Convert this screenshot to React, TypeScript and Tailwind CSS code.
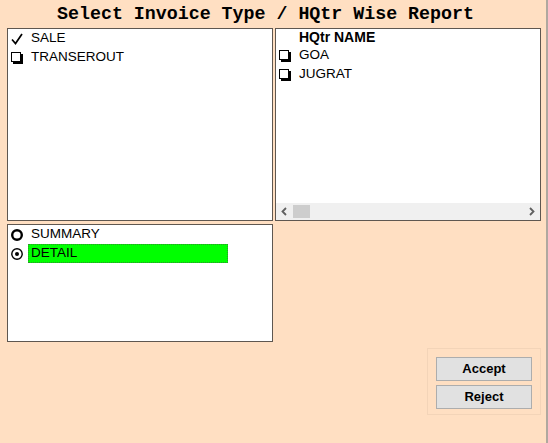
import React from "react";

const Tick = () => (
  <svg width="12" height="12" viewBox="0 0 12 12" className="shrink-0">
    <path d="M1 6.5 L4.5 10.5 L11 1" fill="none" stroke="#000" strokeWidth="1.7" />
  </svg>
);

const Box = () => (
  <svg width="12" height="12" viewBox="0 0 12 12" className="shrink-0">
    <rect x="0.5" y="0.5" width="9" height="9" fill="#fff" stroke="#000" />
    <rect x="10" y="2" width="2" height="10" fill="#000" />
    <rect x="2" y="10" width="10" height="2" fill="#000" />
  </svg>
);

const Radio = ({ on }: { on?: boolean }) => (
  <svg width="12" height="12" viewBox="0 0 12 12" className="shrink-0">
    <circle cx="6" cy="6" r={on ? 5.2 : 4.8} fill="#fff" stroke="#000" strokeWidth={on ? 1.4 : 2.4} />
    {on && <circle cx="6" cy="6" r="2" fill="#000" />}
  </svg>
);

const Chevron = ({ right }: { right?: boolean }) => (
  <svg width="17" height="17" viewBox="0 0 17 17" className="shrink-0">
    <path
      d={right ? "M7 5 L10.5 8.5 L7 12" : "M10 5 L6.5 8.5 L10 12"}
      fill="none"
      stroke="#606060"
      strokeWidth="1.8"
    />
  </svg>
);

const Row = ({ icon, label }: { icon: React.ReactNode; label: string }) => (
  <div className="flex items-center h-[19px] pl-[3px] gap-2">
    {icon}
    <span>{label}</span>
  </div>
);

export default function App() {
  return (
    <div className="w-[548px] h-[443px] bg-[#ffdfc2] border-r-2 border-[#b0a89f] text-[13.5px] text-black font-['Liberation_Sans',Arial,sans-serif]">
      {/* title */}
      <div className="w-[531px] h-[28px] flex items-center justify-center font-['Liberation_Mono','Courier_New',monospace] font-bold text-[18.3px] leading-none">
        Select Invoice Type / HQtr Wise Report
      </div>

      <div className="grid grid-cols-[266px_266px] gap-x-[2px] gap-y-[3px] pl-[7px]">
        {/* invoice type */}
        <div className="h-[193px] bg-white border border-[#5f5750]">
          <Row icon={<Tick />} label="SALE" />
          <Row icon={<Box />} label="TRANSEROUT" />
        </div>

        {/* hqtr */}
        <div className="h-[193px] bg-white border border-[#5f5750] flex flex-col">
          <div className="h-[17px] flex items-center pl-[23px] font-bold text-[14px]">HQtr NAME</div>
          <Row icon={<Box />} label="GOA" />
          <Row icon={<Box />} label="JUGRAT" />
          <div className="mt-auto h-[17px] bg-[#f0f0f0] flex items-center">
            <Chevron />
            <div className="w-[17px] h-[13px] bg-[#cdcdcd]" />
            <div className="ml-auto">
              <Chevron right />
            </div>
          </div>
        </div>

        {/* summary / detail */}
        <div className="h-[118px] bg-white border border-[#5f5750]">
          <div className="flex items-center h-[19px] pl-[3px] gap-2">
            <Radio />
            <span>SUMMARY</span>
          </div>
          <div className="flex items-center h-[19px] pl-[3px] gap-[5px]">
            <Radio on />
            <span className="w-[200px] h-[19px] flex items-center px-[2px] bg-[#00ff00] border border-dotted border-[#2f8f2f]">
              DETAIL
            </span>
          </div>
        </div>
        <div />

        {/* buttons */}
        <div />
        <div className="justify-self-end mt-[3px] w-[114px] border border-[#f3d4b8] px-[8px] pt-[8px] pb-[5px] flex flex-col gap-[4px]">
          <button className="h-[24px] bg-[#e1e1e1] border border-[#adadad] font-bold text-[13px]">Accept</button>
          <button className="h-[24px] bg-[#e1e1e1] border border-[#adadad] font-bold text-[13px]">Reject</button>
        </div>
      </div>
    </div>
  );
}
